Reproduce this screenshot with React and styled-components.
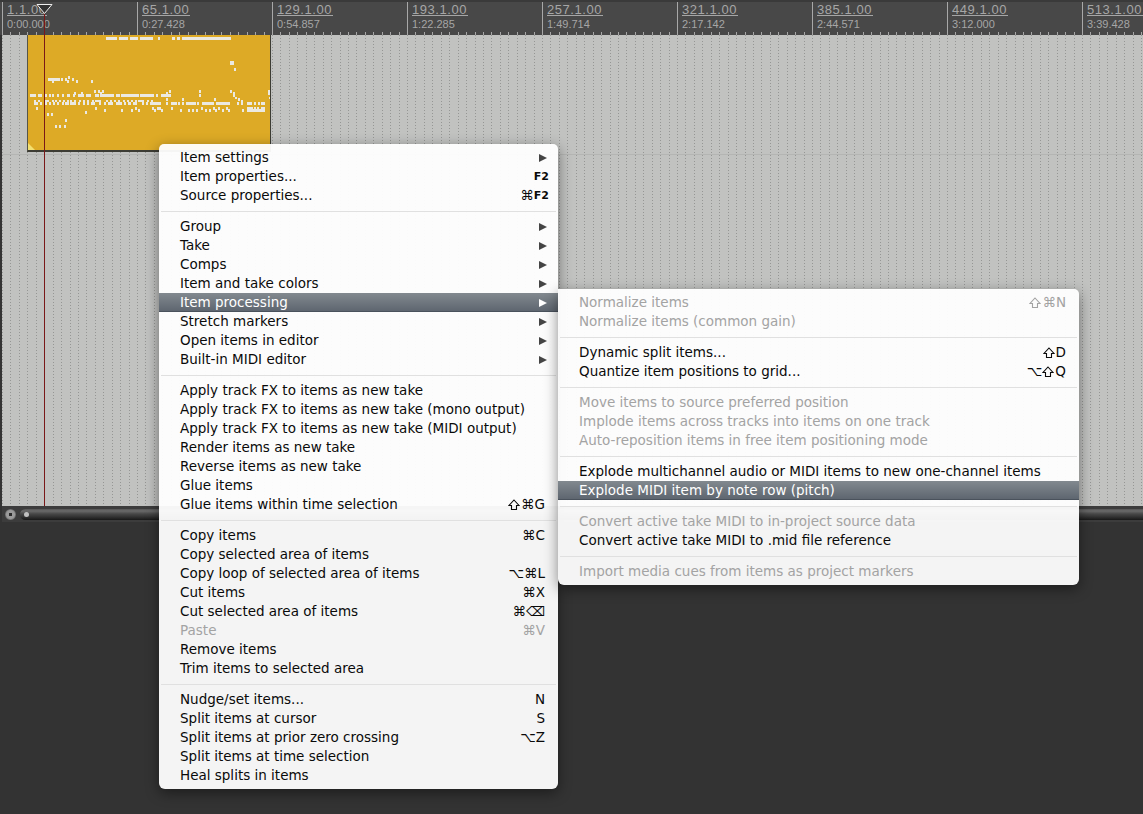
import React from 'react'
import styled, { createGlobalStyle } from 'styled-components'

const GlobalStyle = createGlobalStyle`
  html, body { margin: 0; padding: 0; background: #333333; }
  body { font-family: "DejaVu Sans", "Liberation Sans", sans-serif; }
`

const Page = styled.div`
  position: relative;
  width: 1143px;
  height: 814px;
  overflow: hidden;
  background: #333333;
  display: flex;
  flex-direction: column;
`

const Ruler = styled.div`
  position: relative;
  height: 35px;
  flex: none;
  box-sizing: border-box;
  padding-left: 2px;
  border-top: 2px solid #3a3a3a;
  background-color: #484848;
  display: grid;
  grid-template-columns: repeat(9, 135px);
  font-family: "Liberation Sans", Arial, sans-serif;
`

const RulerTicks = styled.div`
  position: absolute;
  left: 2px;
  bottom: 0;
  display: flex;
  gap: 7.4375px;
`

const RulerTick = styled.div`
  width: 1px;
  height: 3px;
  flex: none;
  background: #a8a8a8;
`

const Bar = styled.div`
  border-left: 1px solid #a8a8a8;
  padding: 2px 0 0 4px;
  color: #a6a6a6;
  white-space: nowrap;
`

const BarPos = styled.div`
  width: fit-content;
  font-size: 13px;
  letter-spacing: 0.55px;
  border-bottom: 1px solid #a6a6a6;
  line-height: 11px;
  padding-right: 1px;
`

const BarTime = styled.div`
  font-size: 11px;
  line-height: 12px;
  margin-top: 2px;
`

const Tracks = styled.div`
  position: relative;
  height: 471px;
  flex: none;
  margin-left: 2px;
  background-color: #c1c2c0;
`

const TrackGrid = styled.div`
  position: absolute;
  top: 0;
  bottom: 0;
  left: 0;
  display: flex;
  gap: 7.4375px;
`

const GridLine = styled.div`
  width: 1px;
  flex: none;
  background-image: repeating-linear-gradient(to bottom, #959694 0, #959694 1px, transparent 1px, transparent 3px);
`

const TrackEdge = styled.div`
  position: absolute;
  left: 0;
  right: 0;
  top: 119px;
  height: 1px;
  background: #b4b5b3;
`

const MidiItem = styled.div`
  position: absolute;
  left: 25px;
  top: 0;
  width: 244px;
  height: 117px;
  box-sizing: border-box;
  background: #ddaa26;
  border-left: 1px solid #55554a;
  border-bottom: 2px solid #3c3c34;
  border-right: 1px solid #3c3c34;
`

const Notes = styled.svg`
  position: absolute;
  left: 0;
  top: 0;
  display: block;
`

const Cursor = styled.div`
  position: absolute;
  left: 44px;
  top: 5px;
  width: 1px;
  height: 501px;
  background: #7a1818;
`

const PlayHead = styled.svg`
  position: absolute;
  left: 36px;
  top: 4px;
`

const ScrollBar = styled.div`
  height: 16px;
  flex: none;
  margin: 0 0 0 2px;
  padding: 3px 0 2px 3px;
  box-sizing: border-box;
  background: #3c3c3c;
  display: flex;
  align-items: center;
  gap: 4px;
`

const ScrollButton = styled.div`
  width: 11px;
  height: 11px;
  border-radius: 50%;
  flex: none;
  background: radial-gradient(circle, #2a2a2a 0 2px, #9a9a9a 2px 4px, #666 5.5px);
`

const ScrollTrack = styled.div`
  flex: 1;
  height: 11px;
  border-radius: 6px 0 0 6px;
  background: linear-gradient(to bottom, #555 0, #6a6a6a 18%, #474747 45%, #333 70%, #181818 100%);
  display: flex;
  align-items: center;
  padding-left: 4px;
`

const ScrollKnob = styled.div`
  width: 5px;
  height: 5px;
  border-radius: 50%;
  background: #c0c0c0;
`

const Menu = styled.div`
  position: absolute;
  left: ${p => p.$left}px;
  top: ${p => p.$top}px;
  width: ${p => p.$width}px;
  box-sizing: border-box;
  padding: 4px 0;
  background: rgba(255, 255, 255, 0.95);
  border-radius: ${p => p.$radius};
  box-shadow: 0 4px 14px rgba(0, 0, 0, 0.45);
  font-size: 13.5px;
  color: #0a0a0a;
`

const Row = styled.div`
  height: 19px;
  line-height: 19px;
  padding: 0 13px 0 ${p => p.$indent}px;
  display: flex;
  align-items: center;
  justify-content: space-between;
  white-space: nowrap;
  color: ${p => (p.$active ? '#ffffff' : p.$disabled ? '#a3a3a3' : '#0a0a0a')};
  background: ${p => (p.$active ? 'linear-gradient(to bottom, #82898f, #5c646e)' : 'none')};
  box-shadow: ${p => (p.$active ? 'inset 0 -1px 0 #4a525c' : 'none')};
`

const Sep = styled.div`
  height: 1px;
  margin: 6px 2px 5px;
  background: #e0e0e0;
`

const Shortcut = styled.span`
  display: inline-flex;
  align-items: center;
  margin-right: ${p => (p.$small ? '-4px' : '0')};
`

const SmallKey = styled.span`
  font-size: 11px;
  font-weight: bold;
`

const ShiftIcon = styled.svg`
  display: block;
  margin-right: 1px;
`

const Arrow = styled.span`
  width: 0;
  height: 0;
  margin-right: -2px;
  border-style: solid;
  border-width: 4.5px 0 4.5px 8px;
  border-color: transparent transparent transparent ${p => (p.$active ? '#ffffff' : '#444444')};
`

const labels = [
  ['1.1.00', '0:00.000'], ['65.1.00', '0:27.428'], ['129.1.00', '0:54.857'],
  ['193.1.00', '1:22.285'], ['257.1.00', '1:49.714'], ['321.1.00', '2:17.142'],
  ['385.1.00', '2:44.571'], ['449.1.00', '3:12.000'], ['513.1.00', '3:39.428'],
]

const gridLines = Array.from({ length: 136 }, (_, i) => i)

// note rows as y, height, then [from, to] runs, in page pixels
const noteRows = [
  [37, 3, [[106, 117], [119, 128], [130, 138], [140, 153], [158, 160], [172, 175], [177, 180], [182, 231]]],
  [61, 4, [[230, 234]]],
  [68, 3, [[234, 236]]],
  [78, 3, [[48, 60], [61, 63], [65, 67], [72, 74]]],
  [76, 3, [[68, 70]]],
  [80, 3, [[52, 54], [67, 69], [76, 78], [91, 93]]],
  [90, 3, [[94, 96], [98, 100], [102, 104], [169, 171], [199, 201], [230, 232], [268, 270]]],
  [92, 3, [[74, 76], [81, 83], [100, 102], [166, 168], [233, 235], [268, 270]]],
  [94, 3, [[30, 36], [38, 42], [45, 47], [49, 51], [52, 54], [57, 59], [62, 64], [67, 70], [73, 75], [78, 84], [86, 91],
    [95, 99], [100, 114], [116, 120], [121, 139], [140, 154], [156, 158], [161, 171], [199, 201], [233, 235]]],
  [97, 2, [[235, 237], [269, 271]]],
  [98, 3, [[238, 240], [166, 168], [182, 184], [214, 216]]],
  [100, 2, [[34, 36], [38, 40], [45, 47], [47, 49], [52, 54], [55, 57], [59, 61], [63, 65], [67, 69], [70, 72], [74, 76],
    [79, 81], [83, 85], [87, 89], [92, 94], [95, 101], [106, 108], [110, 112], [114, 116], [118, 120], [123, 125], [127, 129],
    [131, 133], [135, 137], [138, 144], [147, 149], [151, 153], [241, 243]]],
  [102, 3, [[34, 38], [40, 42], [45, 47], [49, 51], [53, 55], [57, 59], [62, 64], [65, 69], [70, 76], [78, 80], [83, 85],
    [87, 89], [91, 95], [99, 101], [104, 106], [108, 113], [116, 122], [124, 126], [128, 131], [133, 137], [142, 144],
    [146, 148], [150, 161], [166, 168], [171, 177], [178, 180], [182, 184], [186, 196], [197, 199], [202, 214], [216, 230],
    [237, 239], [241, 243], [247, 252], [254, 256], [258, 260], [261, 265]]],
  [107, 3, [[36, 38], [95, 97], [135, 137], [152, 154], [157, 161], [171, 173], [201, 203], [213, 215], [218, 220], [226, 228],
    [247, 253], [254, 256], [257, 259], [261, 265]]],
  [109, 3, [[104, 106], [121, 123], [131, 133], [138, 140], [154, 156], [161, 163], [180, 182], [188, 190], [192, 194],
    [196, 198], [205, 207], [209, 211], [215, 217], [222, 224], [228, 230], [242, 244], [247, 265]]],
  [111, 3, [[85, 87]]],
  [113, 3, [[47, 49], [51, 53]]],
  [119, 3, [[65, 67]]],
  [125, 3, [[55, 57], [59, 61], [64, 66]]],
]

const mainGroups = [
  [
    { label: 'Item settings', sub: true },
    { label: 'Item properties...', keys: 'F2', small: true },
    { label: 'Source properties...', keys: '⌘', fkey: 'F2', small: true },
  ],
  [
    { label: 'Group', sub: true },
    { label: 'Take', sub: true },
    { label: 'Comps', sub: true },
    { label: 'Item and take colors', sub: true },
    { label: 'Item processing', sub: true, active: true },
    { label: 'Stretch markers', sub: true },
    { label: 'Open items in editor', sub: true },
    { label: 'Built-in MIDI editor', sub: true },
  ],
  [
    { label: 'Apply track FX to items as new take' },
    { label: 'Apply track FX to items as new take (mono output)' },
    { label: 'Apply track FX to items as new take (MIDI output)' },
    { label: 'Render items as new take' },
    { label: 'Reverse items as new take' },
    { label: 'Glue items' },
    { label: 'Glue items within time selection', shift: true, keys: '⌘G' },
  ],
  [
    { label: 'Copy items', keys: '⌘C' },
    { label: 'Copy selected area of items' },
    { label: 'Copy loop of selected area of items', keys: '⌥⌘L' },
    { label: 'Cut items', keys: '⌘X' },
    { label: 'Cut selected area of items', keys: '⌘⌫' },
    { label: 'Paste', keys: '⌘V', disabled: true },
    { label: 'Remove items' },
    { label: 'Trim items to selected area' },
  ],
  [
    { label: 'Nudge/set items...', keys: 'N' },
    { label: 'Split items at cursor', keys: 'S' },
    { label: 'Split items at prior zero crossing', keys: '⌥Z' },
    { label: 'Split items at time selection' },
    { label: 'Heal splits in items' },
  ],
]

const subGroups = [
  [
    { label: 'Normalize items', shift: true, keys: '⌘N', disabled: true },
    { label: 'Normalize items (common gain)', disabled: true },
  ],
  [
    { label: 'Dynamic split items...', shift: true, keys: 'D' },
    { label: 'Quantize item positions to grid...', before: '⌥', shift: true, keys: 'Q' },
  ],
  [
    { label: 'Move items to source preferred position', disabled: true },
    { label: 'Implode items across tracks into items on one track', disabled: true },
    { label: 'Auto-reposition items in free item positioning mode', disabled: true },
  ],
  [
    { label: 'Explode multichannel audio or MIDI items to new one-channel items' },
    { label: 'Explode MIDI item by note row (pitch)', active: true },
  ],
  [
    { label: 'Convert active take MIDI to in-project source data', disabled: true },
    { label: 'Convert active take MIDI to .mid file reference' },
  ],
  [
    { label: 'Import media cues from items as project markers', disabled: true },
  ],
]

function Keys({ item }) {
  return (
    <Shortcut $small={item.small}>
      {item.before}
      {item.shift && (
        <ShiftIcon width="12" height="12" viewBox="0 0 12 12">
          <path d="M6 1 L11 6.5 H8.5 V10.5 H3.5 V6.5 H1 Z" fill="none" stroke="currentColor" strokeWidth="1.1" />
        </ShiftIcon>
      )}
      {item.small ? (
        item.fkey ? <>{item.keys}<SmallKey>{item.fkey}</SmallKey></> : <SmallKey>{item.keys}</SmallKey>
      ) : item.keys}
    </Shortcut>
  )
}

function MenuRows({ groups, indent }) {
  return groups.map((group, i) => (
    <React.Fragment key={i}>
      {i > 0 && <Sep />}
      {group.map(item => (
        <Row key={item.label} $indent={indent} $active={item.active} $disabled={item.disabled}>
          <span>{item.label}</span>
          {item.sub && <Arrow $active={item.active} />}
          {item.keys && <Keys item={item} />}
        </Row>
      ))}
    </React.Fragment>
  ))
}

export default function App() {
  return (
    <Page>
      <GlobalStyle />
      <Ruler>
        {labels.map(([pos, time]) => (
          <Bar key={pos}>
            <BarPos>{pos}</BarPos>
            <BarTime>{time}</BarTime>
          </Bar>
        ))}
        <RulerTicks>
          {gridLines.map(i => <RulerTick key={i} />)}
        </RulerTicks>
      </Ruler>
      <Tracks>
        <TrackEdge />
        <TrackGrid>
          {gridLines.map(i => <GridLine key={i} />)}
        </TrackGrid>
        <MidiItem>
          <Notes width="242" height="115">
            <g transform="translate(-28 -35)" fill="#ebe9e2">
              {noteRows.flatMap(([y, h, runs]) => runs.map(([a, b]) => (
                <rect key={`${y}-${a}`} x={a} y={y} width={b - a} height={h} />
              )))}
            </g>
            <path d="M0 108 L7 115 L0 115 Z" fill="#f3e070" />
          </Notes>
        </MidiItem>
      </Tracks>
      <ScrollBar>
        <ScrollButton />
        <ScrollTrack>
          <ScrollKnob />
        </ScrollTrack>
      </ScrollBar>
      <Cursor />
      <PlayHead width="17" height="11">
        <path d="M1 0.5 H16 L8.5 9.5 Z" fill="#333" stroke="#eee" strokeWidth="1" />
      </PlayHead>
      <Menu $left={159} $top={144} $width={399} $radius="5px 5px 6px 6px">
        <MenuRows groups={mainGroups} indent={21} />
      </Menu>
      <Menu $left={558} $top={289} $width={521} $radius="0 5px 6px 6px">
        <MenuRows groups={subGroups} indent={21} />
      </Menu>
    </Page>
  )
}
